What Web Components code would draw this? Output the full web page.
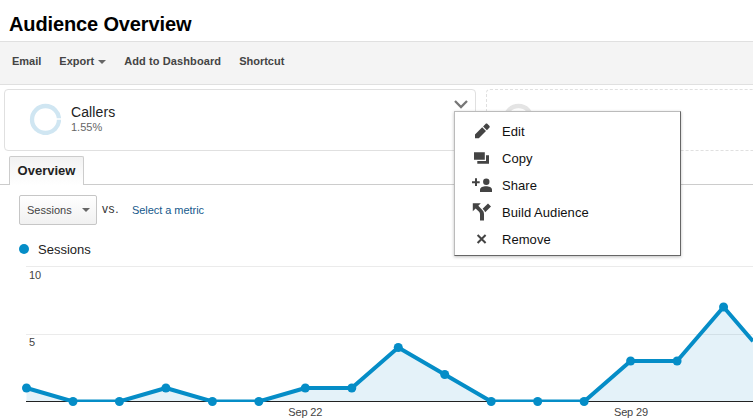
<!DOCTYPE html>
<html lang="en">
<head>
<meta charset="utf-8">
<title>Audience Overview</title>
<style>
    body {
        margin: 0;
        width: 753px;
        height: 419px;
        overflow: hidden;
        background: #fff;
        color: #222;
        font-family: "Liberation Sans", Arial, sans-serif;
    }
</style>
</head>
<body>
<audience-page></audience-page>

<script>
const define = (name, html, setup) => {
    window.customElements.define(name, class extends HTMLElement {
        constructor() {
            super();
            this.attachShadow({ mode: 'open' });
            this.shadowRoot.innerHTML = html;
        }

        connectedCallback() {
            setup && setup(this, this.shadowRoot);
        }
    });
};

define('tool-bar', `
    <style>
        :host {
            display: flex;
            gap: 18px;
            box-sizing: border-box;
            height: 44px;
            padding: 0 12px;
            line-height: 39px;
            background: #f4f4f4;
            border-top: 1px solid #e0e0e0;
            border-bottom: 1px solid #e0e0e0;
            color: #444;
            font-size: 11px;
            font-weight: bold;
        }
    </style>
    <slot></slot>
`);

define('tool-item', `
    <style>
        :host { display: flex; align-items: center; height: 39px; white-space: nowrap; }
        svg { display: none; flex: none; margin: 1px 0 0 4px; }
        :host([menu]) svg { display: block; }
    </style>
    <slot></slot>
    <svg width="8" height="4"><path d="M0 0h8L4 4z" fill="#666"/></svg>
`);

define('segment-card', `
    <style>
        :host {
            display: flex;
            box-sizing: border-box;
            height: 62px;
            border: 1px solid #e0e0e0;
            border-radius: 4px;
        }
        :host([empty]) {
            border-style: dashed;
            border-right: 0;
            border-radius: 4px 0 0 4px;
            --ring: #e4e4e4;
        }
        .ring { margin: 13px 0 0 24px; flex: none; }
        :host([empty]) .ring { margin-left: 15px; }
        .info { flex: 1; margin: 14px 0 0 10px; }
        .name { font-size: 14px; line-height: 16px; letter-spacing: .1px; color: #222; }
        .rate { font-size: 11px; line-height: 14px; color: #666; }
        .arrow { margin: 9px 6px 0 0; }
        :host([empty]) .info, :host([empty]) .arrow { display: none; }
    </style>
    <svg class="ring" width="32" height="32">
        <circle cx="16.500" cy="16.500" r="13.500" fill="none" stroke="var(--ring, #d0e6f2)" stroke-width="4.300"/>
        <path d="M27 16h5" stroke="#fff" stroke-width="1.500"/>
    </svg>
    <div class="info">
        <div class="name"><slot></slot></div>
        <div class="rate"><slot name="rate"></slot></div>
    </div>
    <svg class="arrow" width="16" height="11"><path d="M2 2l6 6 6-6" fill="none" stroke="#777" stroke-width="2.300"/></svg>
`);

define('tab-strip', `
    <style>
        :host {
            display: flex;
            height: 28px;
            padding-left: 9px;
            border-bottom: 1px solid #ccc;
        }
        .tab {
            box-sizing: border-box;
            height: 29px;
            width: 75px;
            border: 1px solid #ccc;
            border-bottom: 0;
            border-radius: 2px 2px 0 0;
            background: linear-gradient(#f2f2f2, #fff);
            font-size: 13px;
            font-weight: bold;
            line-height: 28px;
            text-align: center;
        }
    </style>
    <div class="tab"><slot></slot></div>
`);

define('metric-picker', `
    <style>
        :host { display: flex; padding: 10px 0 0 19px; font-size: 11px; }
        .button {
            display: flex;
            align-items: center;
            justify-content: space-between;
            box-sizing: border-box;
            width: 78px;
            height: 30px;
            padding: 0 6px 0 7px;
            border: 1px solid #c6c6c6;
            border-radius: 2px;
            background: linear-gradient(#fff, #f1f1f1);
            color: #444;
        }
        .vs { margin: 7px 0 0 5px; width: 30px; font-size: 12px; letter-spacing: .6px; color: #333; }
        .link { margin-top: 9px; letter-spacing: -.05px; color: #15598c; }
    </style>
    <div class="button"><slot></slot><svg width="8" height="4"><path d="M0 0h8L4 4z" fill="#666"/></svg></div>
    <div class="vs">vs.</div>
    <div class="link"><slot name="compare"></slot></div>
`);

define('chart-legend', `
    <style>
        :host { display: flex; align-items: center; gap: 9px; padding: 16px 0 0 19px; height: 17px; font-size: 13px; }
        i { width: 10px; height: 10px; margin-bottom: 1px; border-radius: 50%; background: #058dc7; }
    </style>
    <i></i><span><slot></slot></span>
`);

define('line-chart', `
    <style>
        :host { display: block; height: 161px; }
        svg { display: block; }
        text { font-size: 11px; fill: #444; }
    </style>
    <svg width="753" height="161"></svg>
`, (host, root) => {
    const values = host.getAttribute('values').split(',').map(Number);
    const left = 26.5;
    const right = 753;
    const step = 46.47;
    const base = 143.5;
    const unit = 13.5;
    const points = values.map((v, i) => [left + i * step, base - v * unit]);

    // the last day lies past the edge, so cut its segment there
    const dots = points.slice(0, -1);
    const [x1, y1] = points[points.length - 2];
    const [x2, y2] = points[points.length - 1];
    const cut = [right, y1 + (y2 - y1) * (right - x1) / (x2 - x1)];
    const line = [...dots, cut].map(p => p.join(',')).join(' ');

    root.querySelector('svg').innerHTML = `
        <clipPath id="plot"><rect x="0" y="0" width="${right}" height="${base + .5}"/></clipPath>
        <path d="M26 8.500H753M26 76.500H753" stroke="#ebebeb"/>
        <polygon points="${left},${base} ${line} ${right},${base}" fill="#058dc7" fill-opacity=".11"/>
        <path d="M26 ${base}H753" stroke="#222"/>
        <polyline points="${line}" clip-path="url(#plot)" fill="none" stroke="#058dc7" stroke-width="4" stroke-linejoin="round"/>
        ${dots.map(p => `<circle cx="${p[0]}" cy="${p[1]}" r="4.500" fill="#058dc7"/>`).join('')}
        <text x="29" y="21">10</text>
        <text x="29" y="88">5</text>
        <text x="305.300" y="158" text-anchor="middle" textLength="34">Sep 22</text>
        <text x="631" y="158" text-anchor="middle" textLength="34">Sep 29</text>
    `;
});

const icons = {
    edit: '<path d="M3 12.500V16.300h3.800l7.200-7.200-3.800-3.800zM11.100 4.400l3.800 3.800 2.400-2.400c.6-.6.6-1.400 0-2l-1.800-1.800c-.6-.6-1.400-.6-2 0z"/>',
    copy: '<path d="M2 3.200h10.800v7.500H2zM14 6.200h3v8.600H5.300v-2.900H14z"/>',
    share: '<path d="M3 2.300h2v2.900h2.700v2H5V10H3V7.200H0v-2h3z"/><circle cx="14.300" cy="5.700" r="3.200"/><path d="M8 16v-2.300c0-2.300 3.200-3.400 6-3.400s6 1.100 6 3.400V16z"/>',
    build: '<path d="M.8.300h8L6.300 2.800l4 4.200c1.200 1.300 1.700 2.300 1.700 4.200v6.300H8v-6c0-1.400-.3-2-1.200-2.900L3.600 5.500.8 8.300zM16 .4l3 3-5.800 5.800-1-1.600-1.600-1.800z"/>',
    remove: '<path d="M5.600 5l8 8M13.600 5l-8 8" fill="none" stroke="#444" stroke-width="2"/>'
};

define('menu-item', `
    <style>
        :host { display: flex; align-items: center; height: 27px; font-size: 13px; letter-spacing: .05px; color: #111; }
        svg { width: 20px; height: 20px; margin: 0 10px 0 17px; fill: #444; }
    </style>
    <svg viewBox="0 0 20 20"></svg>
    <span><slot></slot></span>
`, (host, root) => {
    root.querySelector('svg').innerHTML = icons[host.getAttribute('icon')];
});

define('popup-menu', `
    <style>
        :host {
            display: block;
            box-sizing: border-box;
            width: 227px;
            height: 145px;
            padding-top: 6px;
            background: #fff;
            border: 1px solid #bbb;
            border-right-color: #666;
            border-bottom-color: #666;
            box-shadow: 0 1px 3px rgba(0, 0, 0, .25);
        }
    </style>
    <slot></slot>
`);

define('audience-page', `
    <style>
        :host { display: block; }
        h1 {
            margin: 0;
            height: 41px;
            padding-left: 9px;
            font-size: 20px;
            line-height: 48px;
            letter-spacing: -.13px;
            box-sizing: border-box;
            color: #000;
        }
        .wide { letter-spacing: .1px; }
        .segments { display: flex; gap: 10px; padding: 4px 0 5px 4px; }
        segment-card { flex: none; width: 472px; }
        segment-card[empty] { flex: 1; width: auto; }
        popup-menu { position: absolute; left: 454px; top: 111px; }
    </style>
    <h1>Audience Overview</h1>
    <tool-bar>
        <tool-item>Email</tool-item>
        <tool-item menu>Export</tool-item>
        <tool-item class="wide">Add to Dashboard</tool-item>
        <tool-item>Shortcut</tool-item>
    </tool-bar>
    <div class="segments">
        <segment-card>Callers<span slot="rate">1.55%</span></segment-card>
        <segment-card empty></segment-card>
    </div>
    <tab-strip>Overview</tab-strip>
    <metric-picker>Sessions<span slot="compare">Select a metric</span></metric-picker>
    <chart-legend>Sessions</chart-legend>
    <line-chart values="1,0,0,1,0,0,1,1,4,2,0,0,0,3,3,7,3"></line-chart>
    <popup-menu>
        <menu-item icon="edit">Edit</menu-item>
        <menu-item icon="copy">Copy</menu-item>
        <menu-item icon="share">Share</menu-item>
        <menu-item icon="build">Build Audience</menu-item>
        <menu-item icon="remove">Remove</menu-item>
    </popup-menu>
`);
</script>
</body>
</html>
